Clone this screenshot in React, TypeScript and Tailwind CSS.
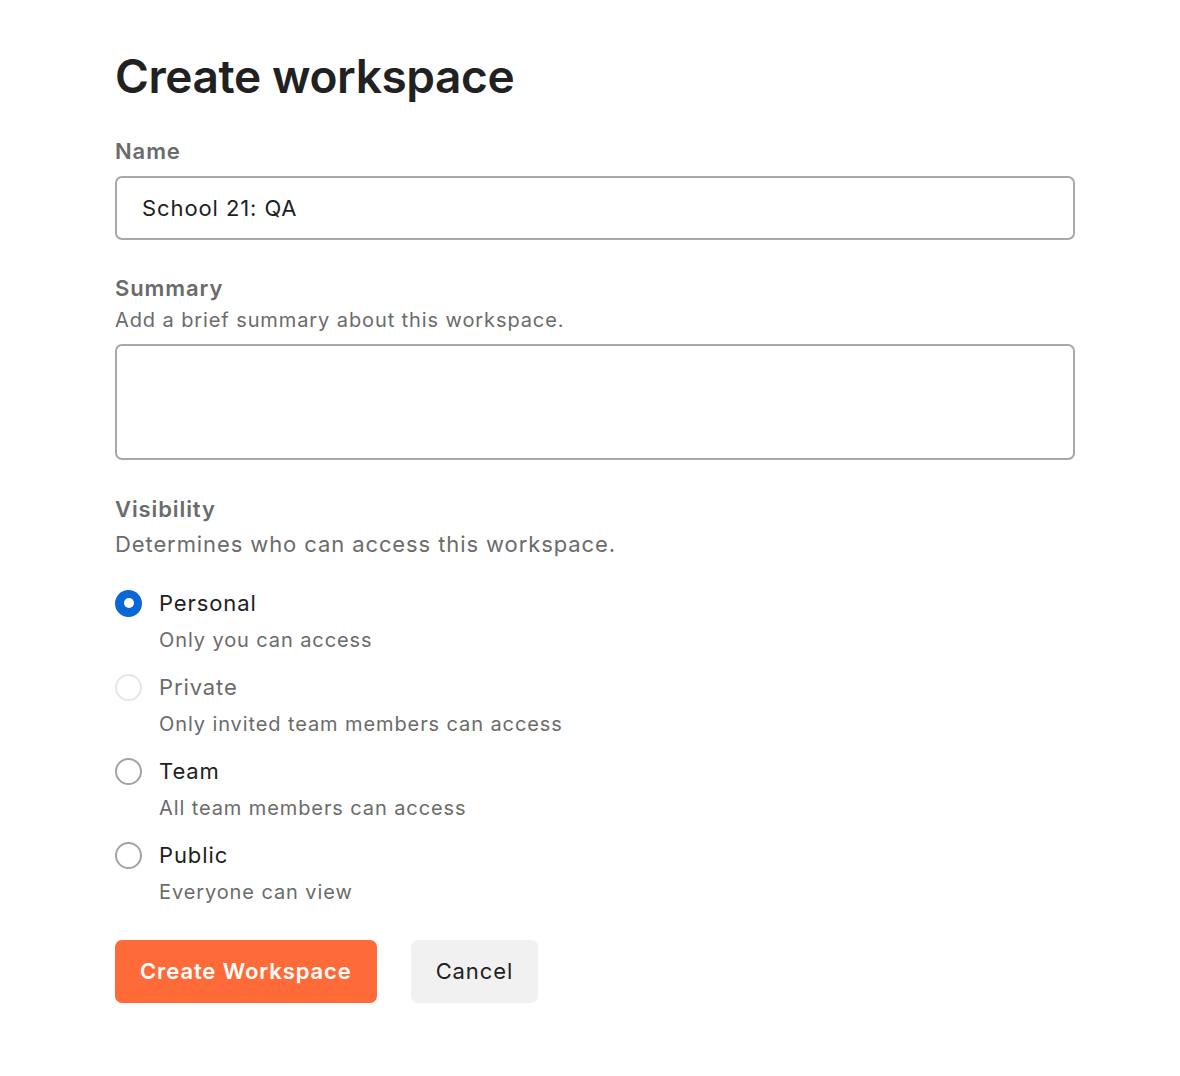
import React from "react";

const OPTIONS = [
  { id: "personal", label: "Personal", hint: "Only you can access", checked: true },
  { id: "private", label: "Private", hint: "Only invited team members can access", disabled: true },
  { id: "team", label: "Team", hint: "All team members can access" },
  { id: "public", label: "Public", hint: "Everyone can view" },
];

function Radio({ checked, disabled }: { checked?: boolean; disabled?: boolean }) {
  if (checked) {
    return (
      <span className="flex h-[27px] w-[27px] shrink-0 items-center justify-center rounded-full bg-[#0b66d6]">
        <span className="h-[10px] w-[10px] rounded-full bg-white" />
      </span>
    );
  }
  return (
    <span
      className={
        disabled
          ? "h-[27px] w-[27px] shrink-0 rounded-full border-2 border-[#e6e6e6] bg-white"
          : "h-[27px] w-[27px] shrink-0 rounded-full border-2 border-[#a3a3a3] bg-white"
      }
    />
  );
}

export default function App() {
  return (
    <div className="min-h-screen bg-white font-['Inter',sans-serif] text-[#212121] tracking-[0.9px]">
      <div className="w-[960px] pl-[115px] pt-[46px] box-content">
        <h1 className="text-[46px] font-semibold leading-[60px] tracking-[-0.4px] text-[#212121]">
          Create workspace
        </h1>

        {/* Name */}
        <div className="mt-[30px]">
          <label className="block text-[22px] font-semibold leading-[30px] text-[#6b6b6b]">Name</label>
          <div className="mt-[10px] flex h-[64px] items-center rounded-[7px] border-2 border-[#a8a8a8] px-[25px] text-[22px] text-[#212121]">
            School 21: QA
          </div>
        </div>

        {/* Summary */}
        <div className="mt-[33px]">
          <label className="block text-[22px] font-semibold leading-[30px] text-[#6b6b6b]">Summary</label>
          <p className="mt-[2px] text-[20px] leading-[30px] text-[#6b6b6b]">Add a brief summary about this workspace.</p>
          <div className="mt-[9px] h-[116px] rounded-[7px] border-2 border-[#a8a8a8]" />
        </div>

        {/* Visibility */}
        <div className="mt-[34px]">
          <label className="block text-[22px] font-semibold leading-[30px] text-[#6b6b6b]">Visibility</label>
          <p className="mt-[5px] text-[22px] leading-[30px] text-[#6b6b6b]">
            Determines who can access this workspace.
          </p>
          <div className="mt-[29px] flex flex-col gap-[17px]">
            {OPTIONS.map((o) => (
              <div key={o.id}>
                <div className="flex items-center gap-[17px]">
                  <Radio checked={o.checked} disabled={o.disabled} />
                  <span
                    className={
                      o.disabled
                        ? "text-[22px] leading-[30px] text-[#6b6b6b]"
                        : "text-[22px] leading-[30px] text-[#212121]"
                    }
                  >
                    {o.label}
                  </span>
                </div>
                <p className="mt-[7px] pl-[44px] text-[20px] leading-[30px] text-[#6b6b6b]">{o.hint}</p>
              </div>
            ))}
          </div>
        </div>

        {/* Actions */}
        <div className="mt-[33px] flex gap-[34px]">
          <button className="h-[63px] rounded-[7px] bg-[#ff6b38] px-[25px] text-[22px] font-semibold tracking-[0.9px] text-white">
            Create Workspace
          </button>
          <button className="h-[63px] rounded-[7px] bg-[#f1f1f1] px-[25px] text-[22px] tracking-[0.9px] text-[#212121]">
            Cancel
          </button>
        </div>
      </div>
    </div>
  );
}
